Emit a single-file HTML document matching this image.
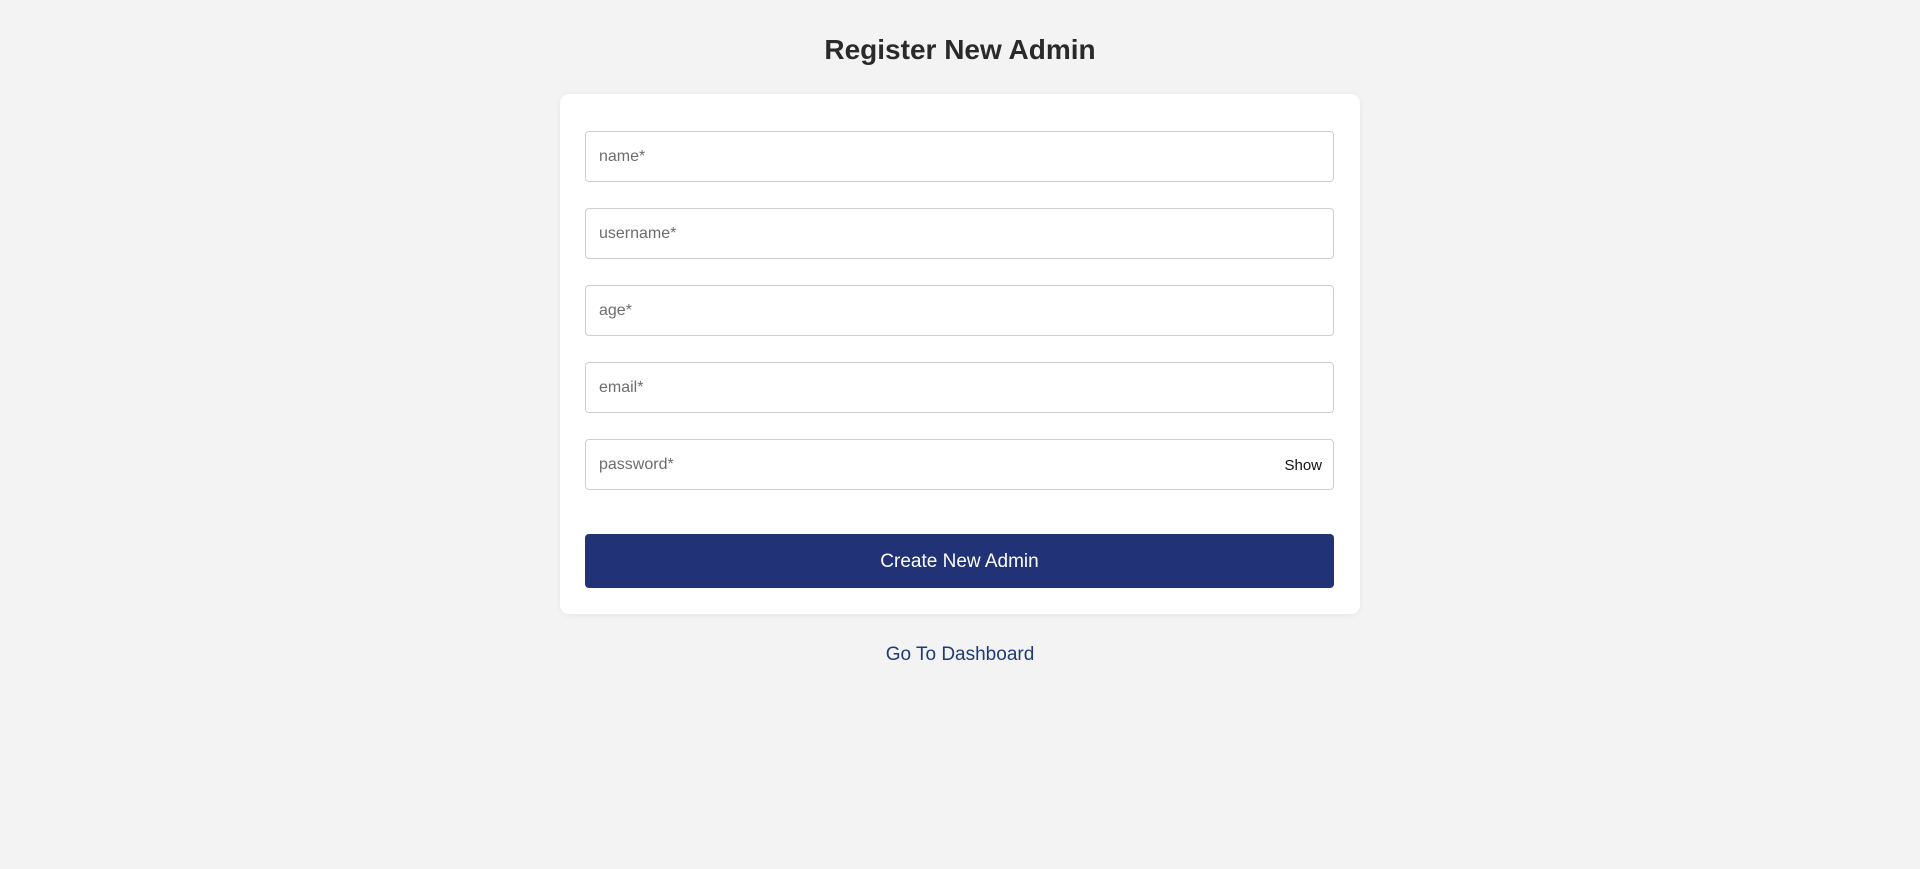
<!DOCTYPE html>
<html><head><style>
html,body{margin:0;padding:0;background:#f3f3f3;width:1920px;height:869px;overflow:hidden;font-family:"Liberation Sans",sans-serif;}
h1{position:absolute;top:31px;left:0;width:1920px;text-align:center;margin:0;font-size:28px;font-weight:bold;color:#2a2a2a;line-height:38px;}
.card{position:absolute;left:560px;top:94px;width:800px;height:520px;background:#fff;border-radius:9px;box-shadow:0 1px 6px rgba(0,0,0,0.06);}
.in{position:absolute;left:25px;width:749px;height:51px;border:1px solid #cfcfcf;border-radius:4px;box-sizing:border-box;}
.in span{position:absolute;left:13px;top:16px;font-size:16px;color:#6d6d6d;}
.in b{position:absolute;right:11px;top:17px;font-size:15px;font-weight:normal;color:#111;}
.btn{position:absolute;left:25px;top:440px;width:749px;height:54px;background:#213376;border-radius:4px;color:#fff;font-size:19px;text-align:center;line-height:56px;}
.link{position:absolute;top:644px;left:0;width:1920px;text-align:center;font-size:19px;color:#1f3a7a;}
</style></head><body>
<h1>Register New Admin</h1>
<div class="card">
<div class="in" style="top:37px"><span>name*</span></div>
<div class="in" style="top:114px"><span>username*</span></div>
<div class="in" style="top:191px"><span>age*</span></div>
<div class="in" style="top:268px"><span>email*</span></div>
<div class="in" style="top:345px"><span>password*</span><b>Show</b></div>
<div class="btn">Create New Admin</div>
</div>
<div class="link">Go To Dashboard</div>
</body></html>
